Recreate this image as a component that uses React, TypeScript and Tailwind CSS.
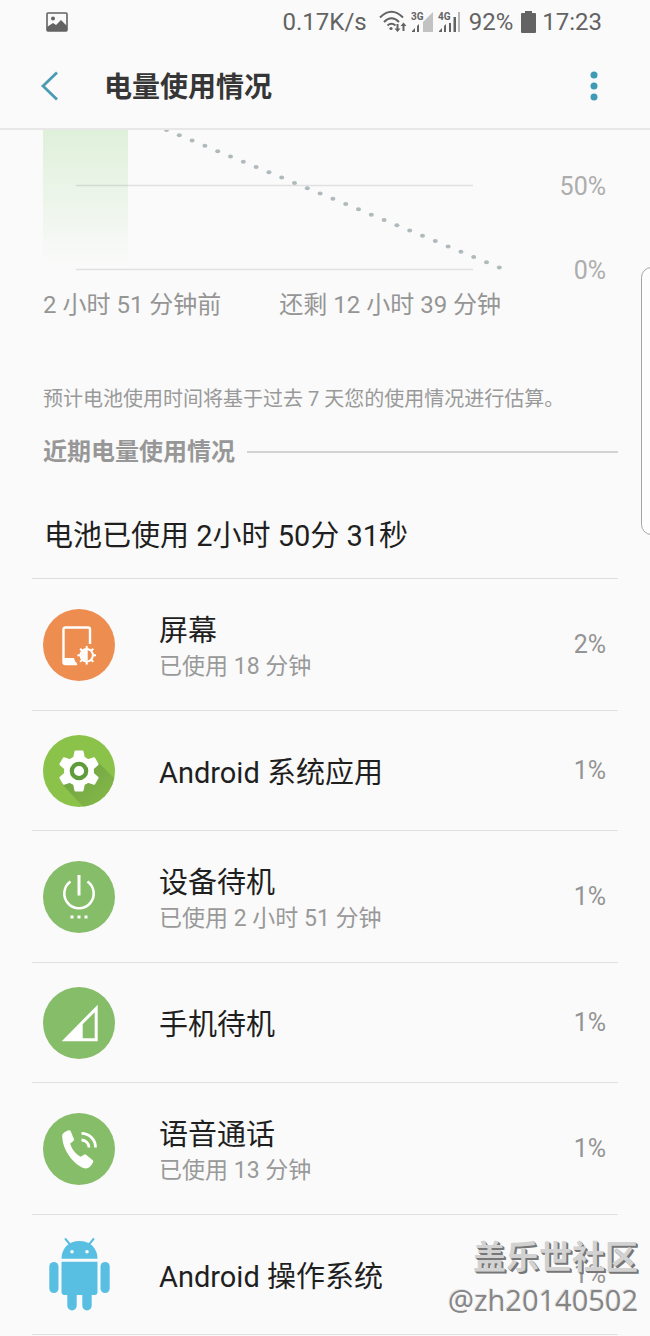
import type { ReactNode } from "react";

const ScreenIcon = () => (
  <svg viewBox="0 0 72 72" className="size-[72px] shrink-0" aria-hidden="true">
    <circle cx="36" cy="36" r="36" fill="#ee8d50" />
    <path d="M47 35V20.500a2 2 0 0 0-2-2H22.500a2 2 0 0 0-2 2V53a2 2 0 0 0 2 2H34" fill="none" stroke="#fff" strokeWidth="2.400" />
    <path d="M20 49h11l1 3 2.500 4H22a2 2 0 0 1-2-2z" fill="#fff" />
    <g transform="translate(43.700 46.300)">
      <circle r="6.200" fill="none" stroke="#fff" strokeWidth="2" />
      <path d="M1-5.500V5.500H0A5.500 5.500 0 0 1 0-5.500z" fill="#fff" />
      {[0, 45, 90, 135, 180, 225, 270, 315].map((a) => (
        <path key={a} d="M0-9.300V-6" stroke="#fff" strokeWidth="2" transform={`rotate(${a})`} />
      ))}
    </g>
  </svg>
);

const GearIcon = () => (
  <svg viewBox="0 0 72 72" className="size-[72px] shrink-0" aria-hidden="true">
    <defs>
      <clipPath id="gear-disc">
        <circle cx="36" cy="36" r="36" />
      </clipPath>
      <linearGradient id="gear-shadow" x1="0" y1="0" x2="1" y2="1">
        <stop offset="0.3" stopColor="#75a744" />
        <stop offset="0.8" stopColor="#84b948" />
      </linearGradient>
    </defs>
    <circle cx="36" cy="36" r="36" fill="#8bc34a" />
    <path d="M52 24L78 50V78H46L19 49z" fill="url(#gear-shadow)" clipPath="url(#gear-disc)" />
    <g transform="translate(36 36)" fill="#fff" stroke="#fff" strokeWidth="2" strokeLinejoin="round">
      <circle r="14" />
      {[0, 60, 120, 180, 240, 300].map((a) => (
        <path key={a} d="M-3.500-19.500h7L5-12.500 8-10H-8l3-2.500z" transform={`rotate(${a})`} />
      ))}
    </g>
    <circle cx="36" cy="36" r="7.200" fill="#fff" stroke="#609c3c" strokeWidth="4.200" />
  </svg>
);

const PowerIcon = () => (
  <svg viewBox="0 0 72 72" className="size-[72px] shrink-0" aria-hidden="true">
    <circle cx="36" cy="36" r="36" fill="#86bd68" />
    <path d="M27.500 20.500A14.700 14.700 0 1 0 44.500 20.500" fill="none" stroke="#fff" strokeWidth="2.600" />
    <path d="M36 14v20.500" stroke="#fff" strokeWidth="3" />
    <path d="M27.500 54.500h3v3h-3zM34.500 54.500h3v3h-3zM41.500 54.500h3v3h-3z" fill="#fff" />
  </svg>
);

const SignalIcon = () => (
  <svg viewBox="0 0 72 72" className="size-[72px] shrink-0" aria-hidden="true">
    <circle cx="36" cy="36" r="36" fill="#86bd68" />
    <path d="M18.700 54.300H54.700V17.700zM39.700 37.300L51.700 25.200V51.300H39.700z" fill="#fff" fillRule="evenodd" />
  </svg>
);

const CallIcon = () => (
  <svg viewBox="0 0 72 72" className="size-[72px] shrink-0" aria-hidden="true">
    <circle cx="36" cy="36" r="36" fill="#86bd68" />
    <path
      d="M19.200 22.500C19.200 20 24 17.500 26 17.200Q27.200 17 27.700 18.200L30.900 26Q31.300 27.200 30.400 28L27.200 30.500C28.500 36 33 41.500 37.800 43.700L41 41.700Q42 41 43 41.700L49.800 47.300Q50.800 48.300 50 49.500C48.500 52.500 45.500 55.500 43 55.500C35 55 19.200 40 19.200 22.500z"
      fill="#fff"
    />
    <path d="M38.500 20.300A14 14 0 0 1 52.500 34.500M38.500 27A7.500 7.500 0 0 1 46 34.500" fill="none" stroke="#fff" strokeWidth="2.800" />
  </svg>
);

const RobotIcon = () => (
  <svg viewBox="0 0 72 72" className="size-[72px] shrink-0 overflow-visible" aria-hidden="true">
    <g fill="#58bfe3">
      <path d="M18.500 19.700C18.500 9 26 2 36.500 2S54.500 9 54.500 19.700z" />
      <path d="M18.500 22.700h36V53a3 3 0 0 1-3 3h-30a3 3 0 0 1-3-3z" />
      <rect x="6.300" y="23" width="9.200" height="31" rx="4.600" />
      <rect x="57.500" y="23" width="9.200" height="31" rx="4.600" />
      <rect x="24.300" y="48" width="9.400" height="23.500" rx="4.700" />
      <rect x="39.300" y="48" width="9.400" height="23.500" rx="4.700" />
    </g>
    <path d="M22.500 0l5 6M50.500 0l-5 6" stroke="#58bfe3" strokeWidth="2" strokeLinecap="round" />
    <circle cx="29" cy="12.700" r="1.800" fill="#fafafa" />
    <circle cx="44" cy="12.700" r="1.800" fill="#fafafa" />
  </svg>
);

type Usage = { name: string; detail?: string; percent: string; icon: ReactNode };

const usages: Usage[] = [
  { name: "屏幕", detail: "已使用 18 分钟", percent: "2%", icon: <ScreenIcon /> },
  { name: "Android 系统应用", percent: "1%", icon: <GearIcon /> },
  { name: "设备待机", detail: "已使用 2 小时 51 分钟", percent: "1%", icon: <PowerIcon /> },
  { name: "手机待机", percent: "1%", icon: <SignalIcon /> },
  { name: "语音通话", detail: "已使用 13 分钟", percent: "1%", icon: <CallIcon /> },
  { name: "Android 操作系统", percent: "1%", icon: <RobotIcon /> },
];

const StatusBar = () => (
  <div className="flex h-11 items-center pl-[46px] pr-12 text-2xl text-[#636363]">
    <svg viewBox="0 0 22 20" className="h-5 w-[22px]" aria-hidden="true">
      <rect x="1" y="1" width="20" height="18" rx="1" fill="none" stroke="#636363" strokeWidth="1.600" />
      <circle cx="7" cy="6.500" r="2" fill="#636363" />
      <path d="M1 15l6-4 3 2 5-5 6 6v5H1z" fill="#636363" />
    </svg>
    <span className="ml-auto">0.17K/s</span>
    <svg viewBox="0 0 28 24" className="ml-3 h-6 w-7" aria-hidden="true">
      <g fill="none" stroke="#636363" strokeWidth="2">
        <path d="M1 7.500Q12.500-4 24 7.500M5 12Q12.500 4.500 20 12M8.500 15.500Q12.500 12 16.500 15.500" />
        <path d="M18.500 14v6M24.500 21v-6" />
      </g>
      <circle cx="12" cy="18.500" r="1.600" fill="#636363" />
      <path d="M15.500 18.500h6l-3 3.500zM21.500 16h6l-3-3.500z" fill="#636363" />
    </svg>
    <svg viewBox="0 0 23 22" className="ml-1 h-[22px] w-[23px]" aria-hidden="true">
      <path d="M22 1v20H12V11z" fill="#c2c2c2" />
      <path d="M1 21v-1l3-3v4zM6 21v-6l2-2v8z" fill="#636363" />
      <text x="0" y="9" fontSize="10" fontWeight="700" fill="#636363">3G</text>
    </svg>
    <svg viewBox="0 0 23 22" className="ml-1 h-[22px] w-[23px]" aria-hidden="true">
      <path d="M20 1h2v20h-2z" fill="#b5b5b5" />
      <path d="M1 21v-1l3-3v4zM6 21v-6l2-2v8zM11 21V12h2v9zM15.500 21V6h2.500v15z" fill="#636363" />
      <text x="0" y="9" fontSize="10" fontWeight="700" fill="#636363">4G</text>
    </svg>
    <span className="ml-2">92%</span>
    <svg viewBox="0 0 15 22" className="ml-2 h-[22px] w-[15px]" aria-hidden="true">
      <path d="M4 0h7v2h3a1 1 0 0 1 1 1v18a1 1 0 0 1-1 1H1a1 1 0 0 1-1-1V3a1 1 0 0 1 1-1h3z" fill="#636363" />
    </svg>
    <span className="ml-1.5">17:23</span>
  </div>
);

const Chart = () => (
  <div className="flex justify-between pl-[43px] pr-11">
    <svg viewBox="0 0 462 144" className="h-36 w-[462px] shrink" role="img" aria-label="电量">
      <defs>
        <linearGradient id="used" x1="0" y1="0" x2="0" y2="1">
          <stop offset="0" stopColor="#dff0da" />
          <stop offset="1" stopColor="#fafafa" />
        </linearGradient>
      </defs>
      <rect width="85" height="136" fill="url(#used)" />
      <path d="M33 55.500h397M33 139.500h397" stroke="#000" strokeOpacity="0.1" strokeWidth="1.500" />
      {Array.from({ length: 27 }, (_, i) => (
        <ellipse key={i} cx={123.5 + i * 12.8} cy={i * 5.29} rx="2.500" ry="2" fill="#b0b9bc" />
      ))}
    </svg>
    <div className="flex flex-col gap-14 pt-[43px] text-right text-[25px] leading-7 text-[#adadad]">
      <span>50%</span>
      <span>0%</span>
    </div>
  </div>
);

export default function App() {
  return (
    <div className="relative min-h-screen overflow-hidden bg-[#fafafa] font-['Roboto','Noto_Sans_CJK_SC',sans-serif] text-[#1f1f1f]">
      <header className="border-b-2 border-[#e6e7e6]">
        <StatusBar />
        <div className="flex h-21 items-center pl-9 pr-11">
          <button type="button" aria-label="返回" className="p-1">
            <svg viewBox="0 0 20 30" className="h-[30px] w-5" aria-hidden="true">
              <path d="M17 1.500L3 15l14 13.500" fill="none" stroke="#4a9bb4" strokeWidth="2.800" />
            </svg>
          </button>
          <h1 className="ml-10 pt-1 text-[28px] leading-10 font-bold text-[#363636]">电量使用情况</h1>
          <button type="button" aria-label="更多选项" className="ml-auto p-2">
            <svg viewBox="0 0 8 30" className="h-[30px] w-2" aria-hidden="true">
              <g fill="#3f9ab5">
                <circle cx="4" cy="4" r="3.500" />
                <circle cx="4" cy="15" r="3.500" />
                <circle cx="4" cy="26" r="3.500" />
              </g>
            </svg>
          </button>
        </div>
      </header>

      <main>
        <Chart />
        <div className="flex gap-[58px] pt-1 pl-[43px] text-2xl leading-8 text-[#959595]">
          <span>2 小时 51 分钟前</span>
          <span>还剩 12 小时 39 分钟</span>
        </div>
        <p className="mt-[62px] pl-[43px] text-xl leading-8 text-[#999]">
          预计电池使用时间将基于过去 7 天您的使用情况进行估算。
        </p>

        <div className="mt-[19px] mr-8 flex items-center gap-3 pl-[43px]">
          <h2 className="text-2xl leading-9 font-bold text-[#979797]">近期电量使用情况</h2>
          <div className="h-0.5 flex-1 bg-[#d2d2d2]" />
        </div>

        <section className="mr-8 ml-8">
          <h3 className="border-b border-[#dedede] pt-[46px] pb-[22px] pl-3 text-[29px] leading-10">
            电池已使用 2小时 50分 31秒
          </h3>
          <ul>
            {usages.map(({ name, detail, percent, icon }) => (
              <li
                key={name}
                className={`flex items-center border-b border-[#e0e0e0] pr-3 pl-[11px] ${detail ? "h-33" : "h-30"}`}
              >
                {icon}
                <div className={`ml-11 flex-1 ${detail ? "pt-2" : "pt-1"}`}>
                  <div className="text-[29px] leading-9">{name}</div>
                  {detail && <div className="text-[23px] leading-9 text-[#999]">{detail}</div>}
                </div>
                <span className="text-[25px] text-[#949494]">{percent}</span>
              </li>
            ))}
          </ul>
        </section>
      </main>

      {/* Edge panel handle */}
      <div className="absolute top-[267px] -right-3 h-[268px] w-[21px] rounded-xl border border-[#a5a5a5] bg-[#fdfdfd]" />

      {/* Watermark */}
      <div className="absolute right-3 bottom-4 text-right">
        <div className="text-[33px] leading-11 font-bold text-[#d2d2d2] [text-shadow:1px_1px_0_#777,2px_2px_0_#777]">
          盖乐世社区
        </div>
        <div className="font-['Open_Sans',sans-serif] text-[29px] leading-10 text-[#858585] [text-shadow:-1px_-1px_0_#e2e2e2]">
          @zh20140502
        </div>
      </div>
    </div>
  );
}
